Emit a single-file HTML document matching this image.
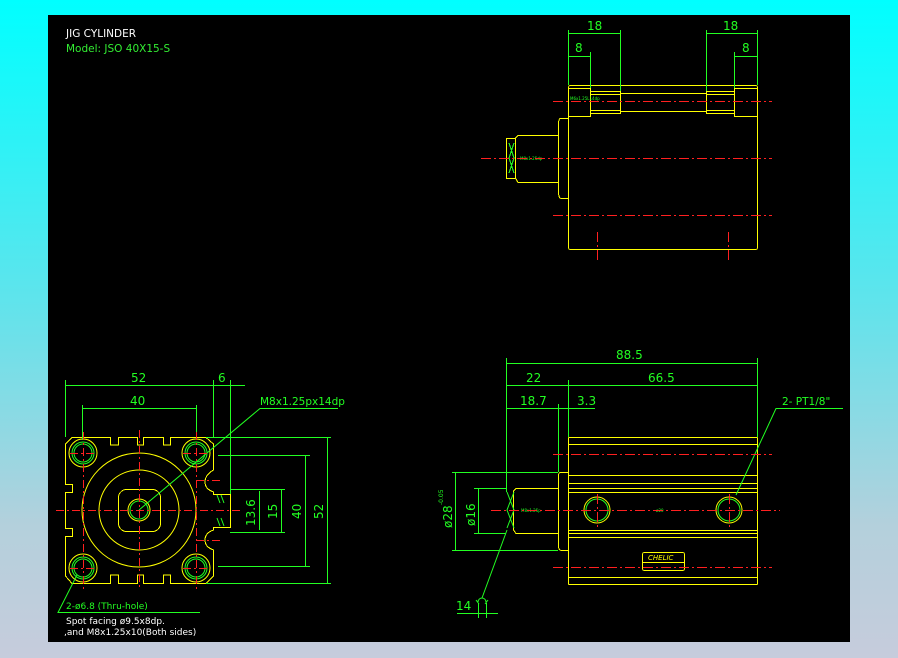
<!DOCTYPE html>
<html><head><meta charset="utf-8"><style>
html,body{margin:0;padding:0;width:898px;height:658px;overflow:hidden;background:linear-gradient(180deg,#00ffff 0%,#5ee4ec 45%,#b4d0dc 80%,#c6ccdc 100%);}
svg{position:absolute;left:0;top:0}
text{font-family:"DejaVu Sans","Liberation Sans",sans-serif;}
line,rect,path{shape-rendering:crispEdges}
</style></head><body>
<svg width="898" height="658" viewBox="0 0 898 658" xmlns="http://www.w3.org/2000/svg">
<rect x="48" y="15" width="802" height="627" fill="#000"/>
<text x="66" y="37" fill="#fff" font-size="10.5">JIG CYLINDER</text>
<text x="66" y="52" fill="#33ee33" font-size="10.5">Model: JSO 40X15-S</text>

<!-- ===== TOP VIEW ===== -->
<g fill="none" stroke="#ffff00" stroke-width="1">
<rect x="568.5" y="85.5" width="189" height="164" rx="2"/>
<rect x="568.5" y="88.5" width="22" height="28"/>
<rect x="734.5" y="88.5" width="23" height="28"/>
<rect x="590.5" y="91.5" width="30" height="22"/>
<rect x="706.5" y="91.5" width="28" height="22"/>
<line x1="620" y1="93.5" x2="706" y2="93.5"/><line x1="620" y1="111.5" x2="706" y2="111.5"/>
<line x1="590" y1="94.5" x2="620" y2="94.5"/><line x1="706" y1="94.5" x2="734" y2="94.5"/>
<line x1="590" y1="110.5" x2="620" y2="110.5"/><line x1="706" y1="110.5" x2="734" y2="110.5"/>
<path d="M568 118.5 H561 Q558.5 118 558.5 124 V192 Q558.5 198 561 198.5 H568"/>
<path d="M558 135.5 H518 L515.5 138 V178 L518 182.5 H558"/>
<rect x="506.5" y="138.5" width="9" height="40"/>
</g>
<g fill="none" stroke="#22ff22" stroke-width="1">
<path d="M509 143 L514 158 L509 173 M514 143 L509 158 L514 173"/>
<line x1="568.5" y1="30" x2="568.5" y2="85"/><line x1="620.5" y1="30" x2="620.5" y2="91"/>
<line x1="590.5" y1="52" x2="590.5" y2="88"/><line x1="706.5" y1="30" x2="706.5" y2="91"/>
<line x1="757.5" y1="30" x2="757.5" y2="85"/><line x1="734.5" y1="52" x2="734.5" y2="88"/>
<line x1="568" y1="33.5" x2="620" y2="33.5"/><line x1="706" y1="33.5" x2="757" y2="33.5"/>
<line x1="568" y1="56.5" x2="590" y2="56.5"/><line x1="734" y1="56.5" x2="757" y2="56.5"/>
</g>
<g fill="#22ff22" font-size="12">
<text x="587" y="30">18</text><text x="723" y="30">18</text>
<text x="575" y="52">8</text><text x="742" y="52">8</text>
<text x="570" y="100" font-size="4">M6x1.25L14dp</text><text x="520" y="160" font-size="4">M8x1.25dp</text>
</g>
<g stroke="#ff2020" stroke-width="1" stroke-dasharray="10,3,2,3">
<line x1="553" y1="101.5" x2="772" y2="101.5"/><line x1="481" y1="158.5" x2="772" y2="158.5"/>
<line x1="553" y1="215.5" x2="772" y2="215.5"/>
<line x1="597.5" y1="232" x2="597.5" y2="263"/><line x1="728.5" y1="232" x2="728.5" y2="263"/>
</g>

<!-- ===== FRONT VIEW ===== -->
<g fill="none" stroke="#ffff00" stroke-width="1">
<path d="M72 437.5 H110.5 V445 H118.5 V437.5 H137.5 V445 H143.5 V437.5 H163.5 V445 H170.5 V437.5 H206 L213.5 444 V470 Q205 475 205 482 Q205 489 213.5 492 V494.5 H230.5 V527.5 H213.5 V530 Q205 533 205 540 Q205 547 213.5 550 V576 L206 583.5 H170.5 V575 H163.5 V583.5 H143.5 V575 H137.5 V583.5 H118.5 V575 H110.5 V583.5 H72 L65.5 576 V536.5 H72.5 V528.5 H65.5 V492.5 H72.5 V484.5 H65.5 V444 Z"/>
<circle cx="139" cy="510" r="57"/><circle cx="139" cy="510" r="40"/>
<rect x="118.5" y="489.5" width="42" height="42" rx="8"/>
<circle cx="139" cy="510" r="11"/>
<circle cx="83" cy="453" r="14"/><circle cx="196" cy="453" r="14"/>
<circle cx="83" cy="568" r="14"/><circle cx="196" cy="568" r="14"/>
</g>
<g fill="none" stroke="#22ff22" stroke-width="1">
<circle cx="83" cy="453" r="11"/><circle cx="196" cy="453" r="11"/><circle cx="83" cy="568" r="11"/><circle cx="196" cy="568" r="11"/>
<circle cx="83" cy="453" r="9"/><circle cx="196" cy="453" r="9"/><circle cx="83" cy="568" r="9"/><circle cx="196" cy="568" r="9"/>
<circle cx="139" cy="510" r="9"/>
<line x1="65.5" y1="380" x2="65.5" y2="437"/><line x1="213.5" y1="380" x2="213.5" y2="437"/><line x1="230.5" y1="380" x2="230.5" y2="494"/>
<line x1="82.5" y1="405" x2="82.5" y2="440"/><line x1="196.5" y1="405" x2="196.5" y2="440"/>
<line x1="65" y1="385.5" x2="213" y2="385.5"/><line x1="213" y1="385.5" x2="245" y2="385.5"/>
<line x1="82" y1="408.5" x2="196" y2="408.5"/>
<line x1="206" y1="437.5" x2="331" y2="437.5"/><line x1="206" y1="583.5" x2="331" y2="583.5"/>
<line x1="218" y1="455.5" x2="310" y2="455.5"/><line x1="218" y1="566.5" x2="310" y2="566.5"/>
<line x1="230" y1="489.5" x2="285" y2="489.5"/><line x1="230" y1="532.5" x2="285" y2="532.5"/>
<line x1="327.5" y1="437" x2="327.5" y2="583"/><line x1="305.5" y1="455" x2="305.5" y2="566"/>
<line x1="281.5" y1="489" x2="281.5" y2="532"/><line x1="259.5" y1="491" x2="259.5" y2="530"/>
<path d="M139 510 L260 408.5 H338" style="shape-rendering:auto"/>
<path d="M77 575 L58 612.5 H200" style="shape-rendering:auto"/>
<path d="M217 495 l3 8 M221 495 l3 8 M217 518 l3 8 M221 518 l3 8" style="shape-rendering:auto"/>
</g>
<g fill="#22ff22" font-size="12">
<text x="131" y="382">52</text><text x="218" y="382">6</text><text x="130" y="405">40</text>
<text x="260" y="405" font-size="10.5">M8x1.25px14dp</text>
<text transform="translate(323 519) rotate(-90)">52</text>
<text transform="translate(301 519) rotate(-90)">40</text>
<text transform="translate(277 519) rotate(-90)">15</text>
<text transform="translate(255 526) rotate(-90)">13.6</text>
</g>
<g fill="#fff" font-size="9">
<text x="66" y="609" fill="#22ff22">2-ø6.8 (Thru-hole)</text>
<text x="66" y="624">Spot facing ø9.5x8dp.</text>
<text x="64" y="635">,and M8x1.25x10(Both sides)</text>
</g>
<g stroke="#ff2020" stroke-width="1" stroke-dasharray="8,3,2,3">
<line x1="56" y1="510.5" x2="240" y2="510.5"/><line x1="139.5" y1="430" x2="139.5" y2="590"/>
<line x1="70" y1="453.5" x2="96" y2="453.5"/><line x1="183" y1="453.5" x2="209" y2="453.5"/>
<line x1="70" y1="568.5" x2="96" y2="568.5"/><line x1="183" y1="568.5" x2="209" y2="568.5"/>
<line x1="83.5" y1="432" x2="83.5" y2="590"/><line x1="196.5" y1="432" x2="196.5" y2="590"/>
<line x1="196" y1="480.5" x2="222" y2="480.5"/><line x1="196" y1="540.5" x2="222" y2="540.5"/>
</g>

<!-- ===== SIDE VIEW ===== -->
<g fill="none" stroke="#ffff00" stroke-width="1">
<rect x="568.5" y="437.5" width="189" height="147" rx="1"/>
<line x1="568" y1="444.5" x2="757" y2="444.5"/><line x1="568" y1="475.5" x2="757" y2="475.5"/>
<line x1="568" y1="483.5" x2="757" y2="483.5"/><line x1="568" y1="488.5" x2="757" y2="488.5"/>
<line x1="568" y1="492.5" x2="757" y2="492.5"/><line x1="568" y1="530.5" x2="757" y2="530.5"/>
<line x1="568" y1="533.5" x2="757" y2="533.5"/><line x1="568" y1="537.5" x2="757" y2="537.5"/>
<line x1="568" y1="577.5" x2="757" y2="577.5"/>
<path d="M568 472.5 H561 Q558.5 472 558.5 476 V546 Q558.5 550 561 550.5 H568"/>
<path d="M558 488.5 H516 L513.5 491 V530 L516 533.5 H558"/>
<circle cx="597" cy="510" r="13"/><circle cx="729" cy="510" r="13"/>
<rect x="642.5" y="552.5" width="42" height="18" rx="2"/>
<line x1="642" y1="562.5" x2="684" y2="562.5"/>
</g>
<text x="648" y="560" fill="#ffff00" font-size="7" font-style="italic">CHELIC</text>
<g fill="none" stroke="#22ff22" stroke-width="1">
<circle cx="729" cy="510" r="11"/><circle cx="597" cy="510" r="11"/>
<path d="M507 492 L514 510 L507 528 M514 492 L507 510 L514 528" style="shape-rendering:auto"/>
<line x1="506.5" y1="358" x2="506.5" y2="492"/><line x1="757.5" y1="358" x2="757.5" y2="437"/>
<line x1="568.5" y1="380" x2="568.5" y2="437"/><line x1="558.5" y1="404" x2="558.5" y2="472"/>
<line x1="506" y1="363.5" x2="757" y2="363.5"/><line x1="506" y1="385.5" x2="757" y2="385.5"/>
<line x1="506" y1="408.5" x2="595" y2="408.5"/>
<line x1="452" y1="472.5" x2="558" y2="472.5"/><line x1="452" y1="550.5" x2="558" y2="550.5"/>
<line x1="474" y1="488.5" x2="506" y2="488.5"/><line x1="474" y1="533.5" x2="506" y2="533.5"/>
<line x1="455.5" y1="472" x2="455.5" y2="550"/><line x1="478.5" y1="488" x2="478.5" y2="533"/>
<path d="M736 495 L776 408.5 H843" style="shape-rendering:auto"/>
<path d="M507 530 L482 598" style="shape-rendering:auto"/>
<path d="M478 602 a4 4 0 1 1 8 0 M476 600 l3 4 M488 600 l-3 4" style="shape-rendering:auto"/>
<line x1="457" y1="613.5" x2="498" y2="613.5"/><line x1="478.5" y1="603" x2="478.5" y2="618"/><line x1="486.5" y1="603" x2="486.5" y2="618"/>
</g>
<g fill="#22ff22" font-size="12">
<text x="616" y="359">88.5</text><text x="526" y="382">22</text><text x="648" y="382">66.5</text>
<text x="520" y="405">18.7</text><text x="577" y="405">3.3</text>
<text x="782" y="405" font-size="10.5">2- PT1/8"</text>
<text x="456" y="610">14</text>
<text transform="translate(452 528) rotate(-90)">ø28</text>
<text transform="translate(443 505) rotate(-90)" font-size="6">-0.05</text>
<text transform="translate(475 526) rotate(-90)">ø16</text>
<text x="521" y="512" font-size="4">M8x1.25p</text><text x="656" y="512" font-size="4">ø20</text>
</g>
<g stroke="#ff2020" stroke-width="1" stroke-dasharray="10,3,2,3">
<line x1="553" y1="454.5" x2="772" y2="454.5"/><line x1="491" y1="510.5" x2="780" y2="510.5"/>
<line x1="553" y1="567.5" x2="772" y2="567.5"/>
<line x1="597.5" y1="494" x2="597.5" y2="527"/><line x1="729.5" y1="494" x2="729.5" y2="527"/>
</g>
</svg>
</body></html>
